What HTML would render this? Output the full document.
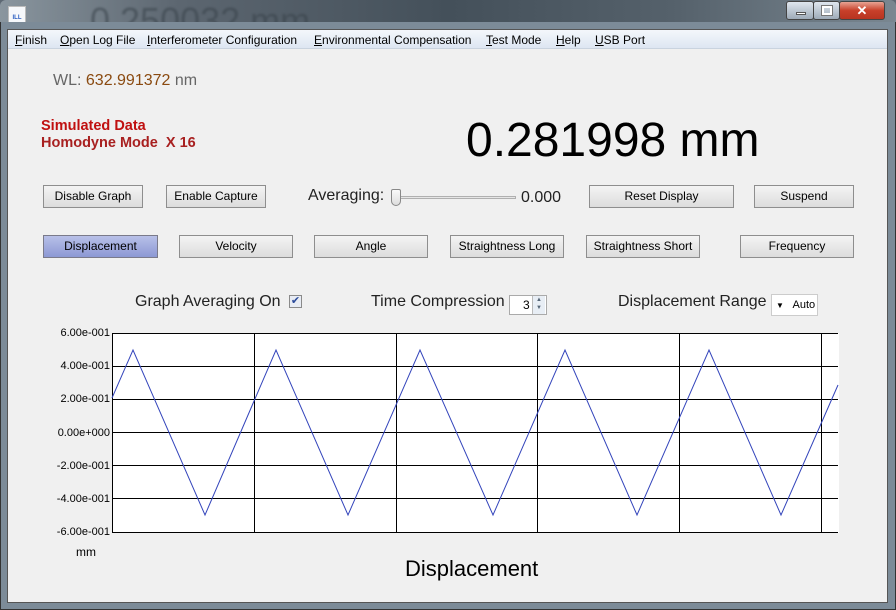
<!DOCTYPE html>
<html><head><meta charset="utf-8"><style>
*{margin:0;padding:0;box-sizing:border-box}
html,body{width:896px;height:610px;overflow:hidden}
body{background:#5d6873;font-family:"Liberation Sans",sans-serif;position:relative}
.title{position:absolute;left:0;top:0;width:896px;height:30px;background:linear-gradient(90deg,#8a969f 0%,#5c6670 20%,#44505a 50%,#55616b 75%,#7a8791 100%);border-radius:6px 6px 0 0}
.frame{position:absolute;left:0;top:22px;width:896px;height:588px;background:#7c8b98;border:1px solid #333;border-top:none}
.client{position:absolute;left:7px;top:29px;width:881px;height:574px;background:#f0f0f0;border:1px solid #555}
.menu{position:absolute;left:0;top:0;width:100%;height:19px;background:linear-gradient(#f4f7fb,#dde6f2);border-bottom:1px solid #c9d3df;font-size:12px;color:#000}
.menu span{position:absolute;top:3px;white-space:nowrap}
.abs{position:absolute;white-space:nowrap}
.btn{position:absolute;height:23px;border:1px solid #8e8e8e;background:linear-gradient(#f4f4f4,#dcdcdc);font-size:12px;text-align:center;line-height:21px;color:#000;white-space:nowrap}
.sel{background:linear-gradient(#b8c0e8,#8c98d4);border-color:#7a7a8a}
.wb{position:absolute;top:1px;height:19px;border:1px solid #444;border-radius:3px}
.yl{position:absolute;left:40px;width:62px;text-align:right;font-size:11px;white-space:nowrap}
</style></head><body>
<div class="title"></div>
<div class="abs" style="left:90px;top:0;font-size:36px;color:#3a444c;opacity:.6;filter:blur(1px)">0.250032 mm</div>
<div class="abs" style="left:8px;top:6px;width:18px;height:18px;background:#f6f8fb;border:1px solid #bbb;font-size:6px;color:#2a5cc0;text-align:center;line-height:22px;font-weight:bold">ILL</div>
<div class="wb" style="left:786px;width:28px;background:linear-gradient(#dfe6ee,#9eabb8)"><div class="abs" style="left:9px;top:10px;width:10px;height:3px;background:#fff;border:1px solid #555"></div></div>
<div class="wb" style="left:813px;width:27px;background:linear-gradient(#dfe6ee,#9eabb8)"><div class="abs" style="left:8px;top:4px;width:10px;height:9px;border:2px solid #fff;outline:1px solid #777"></div></div>
<div class="wb" style="left:839px;width:46px;background:linear-gradient(#e8a494,#c8402a 50%,#b83420);color:#fff;font-weight:bold;font-size:13px;text-align:center;line-height:17px">✕</div>
<div class="frame"></div>
<div class="client">
<div class="menu">
<span style="left:7px"><u>F</u>inish</span>
<span style="left:52px"><u>O</u>pen Log File</span>
<span style="left:139px"><u>I</u>nterferometer Configuration</span>
<span style="left:306px"><u>E</u>nvironmental Compensation</span>
<span style="left:478px"><u>T</u>est Mode</span>
<span style="left:548px"><u>H</u>elp</span>
<span style="left:587px"><u>U</u>SB Port</span>
</div>
<div class="abs" style="left:45px;top:42px;font-size:16px;color:#666">WL: <span style="color:#8a4a10">632.991372</span> nm</div>
<div class="abs" style="left:33px;top:88px;font-size:14.5px;font-weight:bold;color:#c01010;line-height:17px">Simulated Data<br><span style="color:#a82020">Homodyne Mode&nbsp; X 16</span></div>
<div class="abs" style="left:458px;top:83px;font-size:48px;color:#000">0.281998 mm</div>
<div class="btn" style="left:35px;top:155px;width:100px">Disable Graph</div>
<div class="btn" style="left:158px;top:155px;width:100px">Enable Capture</div>
<div class="abs" style="left:300px;top:157px;font-size:16px;color:#222">Averaging:</div>
<div class="abs" style="left:384px;top:166px;width:124px;height:3px;border:1px solid #b0b0b0;background:#e6e6e6"></div>
<div class="abs" style="left:383px;top:159px;width:10px;height:17px;border:1px solid #888;border-radius:2px 2px 5px 5px;background:linear-gradient(#fafafa,#ddd)"></div>
<div class="abs" style="left:513px;top:159px;font-size:16px;color:#222">0.000</div>
<div class="btn" style="left:581px;top:155px;width:145px">Reset Display</div>
<div class="btn" style="left:746px;top:155px;width:100px">Suspend</div>
<div class="btn sel" style="left:35px;top:205px;width:115px">Displacement</div>
<div class="btn" style="left:171px;top:205px;width:114px">Velocity</div>
<div class="btn" style="left:306px;top:205px;width:114px">Angle</div>
<div class="btn" style="left:442px;top:205px;width:114px">Straightness Long</div>
<div class="btn" style="left:578px;top:205px;width:114px">Straightness Short</div>
<div class="btn" style="left:732px;top:205px;width:114px">Frequency</div>
<div class="abs" style="left:127px;top:263px;font-size:16px;color:#222">Graph Averaging On</div>
<div class="abs" style="left:281px;top:265px;width:13px;height:13px;border:1px solid #8a8a8a;background:#e8ecf4;color:#2a4a9a;font-size:11px;line-height:11px;text-align:center">✔</div>
<div class="abs" style="left:363px;top:263px;font-size:16px;color:#222">Time Compression</div>
<div class="abs" style="left:501px;top:265px;width:38px;height:20px;border:1px solid #aaa;background:#fff;font-size:12px;line-height:18px;padding-left:13px">3</div>
<div class="abs" style="left:524px;top:266px;width:13px;height:18px;background:#e8eef5;border-left:1px solid #bbb;font-size:6px;color:#567;text-align:center;line-height:8px">▲<br>▼</div>
<div class="abs" style="left:610px;top:263px;font-size:16px;color:#222">Displacement Range</div>
<div class="abs" style="left:763px;top:264px;width:47px;height:22px;border:1px solid #ccc;background:#fff;font-size:11px;line-height:20px"><span style="font-size:8px;margin-left:4px">▼</span>&nbsp;&nbsp; Auto</div>
<div class="yl" style="top:297px">6.00e-001</div>
<div class="yl" style="top:330px">4.00e-001</div>
<div class="yl" style="top:363px">2.00e-001</div>
<div class="yl" style="top:397px">0.00e+000</div>
<div class="yl" style="top:430px">-2.00e-001</div>
<div class="yl" style="top:463px">-4.00e-001</div>
<div class="yl" style="top:496px">-6.00e-001</div>
<div class="abs" style="left:68px;top:515px;font-size:12px">mm</div>
<div class="abs" style="left:397px;top:526px;font-size:22px;color:#000">Displacement</div>
</div>
<svg class="abs" style="left:0;top:0" width="896" height="610">
<rect x="112.5" y="333.5" width="726" height="199" fill="#fff" stroke="#000"/>
<g stroke="#000" stroke-width="1">
<line x1="112" y1="366.5" x2="839" y2="366.5"/><line x1="112" y1="399.5" x2="839" y2="399.5"/><line x1="112" y1="432.5" x2="839" y2="432.5"/><line x1="112" y1="465.5" x2="839" y2="465.5"/><line x1="112" y1="498.5" x2="839" y2="498.5"/>
<line x1="254.5" y1="333" x2="254.5" y2="532"/><line x1="396.5" y1="333" x2="396.5" y2="532"/><line x1="537.5" y1="333" x2="537.5" y2="532"/><line x1="679.5" y1="333" x2="679.5" y2="532"/><line x1="821.5" y1="333" x2="821.5" y2="532"/>
</g>
<line x1="838.5" y1="333" x2="838.5" y2="533" stroke="#fff" stroke-width="1"/>
<polyline fill="none" stroke="#3344bb" stroke-width="1" points="112,398 133,350 205,515 276,350 348,515 420,350 493,515 565,350 637,515 709,350 781,515 838,385"/>
</svg>
</body></html>
